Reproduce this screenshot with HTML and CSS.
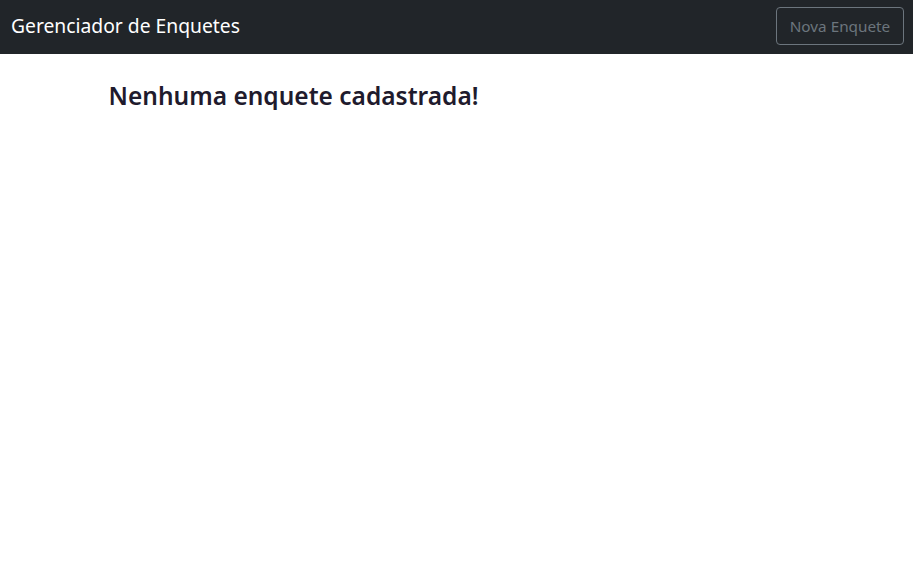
FILE: index.html
```html
<!DOCTYPE html>
<html lang="pt-BR">
<head>
<meta charset="utf-8">
<title>Gerenciador de Enquetes</title>
<link rel="stylesheet" href="styles.css">
</head>
<body>
<nav class="navbar">
  <span class="brand">Gerenciador de Enquetes</span>
  <button class="btn-outline">Nova Enquete</button>
</nav>
<main class="container">
  <h4 class="empty">Nenhuma enquete cadastrada!</h4>
</main>
</body>
</html>
```

FILE: styles.css
```css
* { box-sizing: border-box; }
body {
  margin: 0;
  font-family: "Noto Sans", "Open Sans", sans-serif;
  color: #212529;
  background: #fff;
}
.navbar {
  height: 54px;
  background: #212529;
  display: flex;
  align-items: center;
  justify-content: space-between;
  padding: 0 9px 2px 11px;
}
.brand {
  color: #fff;
  font-size: 19.3px;
  line-height: 1.5;
}
.btn-outline {
  height: 38px;
  width: 128px;
  border: 1px solid #6c757d;
  border-radius: 4px;
  background: transparent;
  color: #6c757d;
  font-family: inherit;
  font-size: 15.3px;
  padding: 0 12px;
}
.container {
  max-width: 720px;
  margin: 0 auto;
  padding: 27px 12px 0;
}
.empty {
  margin: 0;
  font-size: 24.5px;
  font-weight: 600;
  line-height: 1.2;
  color: #1f1b2d;
}
```
